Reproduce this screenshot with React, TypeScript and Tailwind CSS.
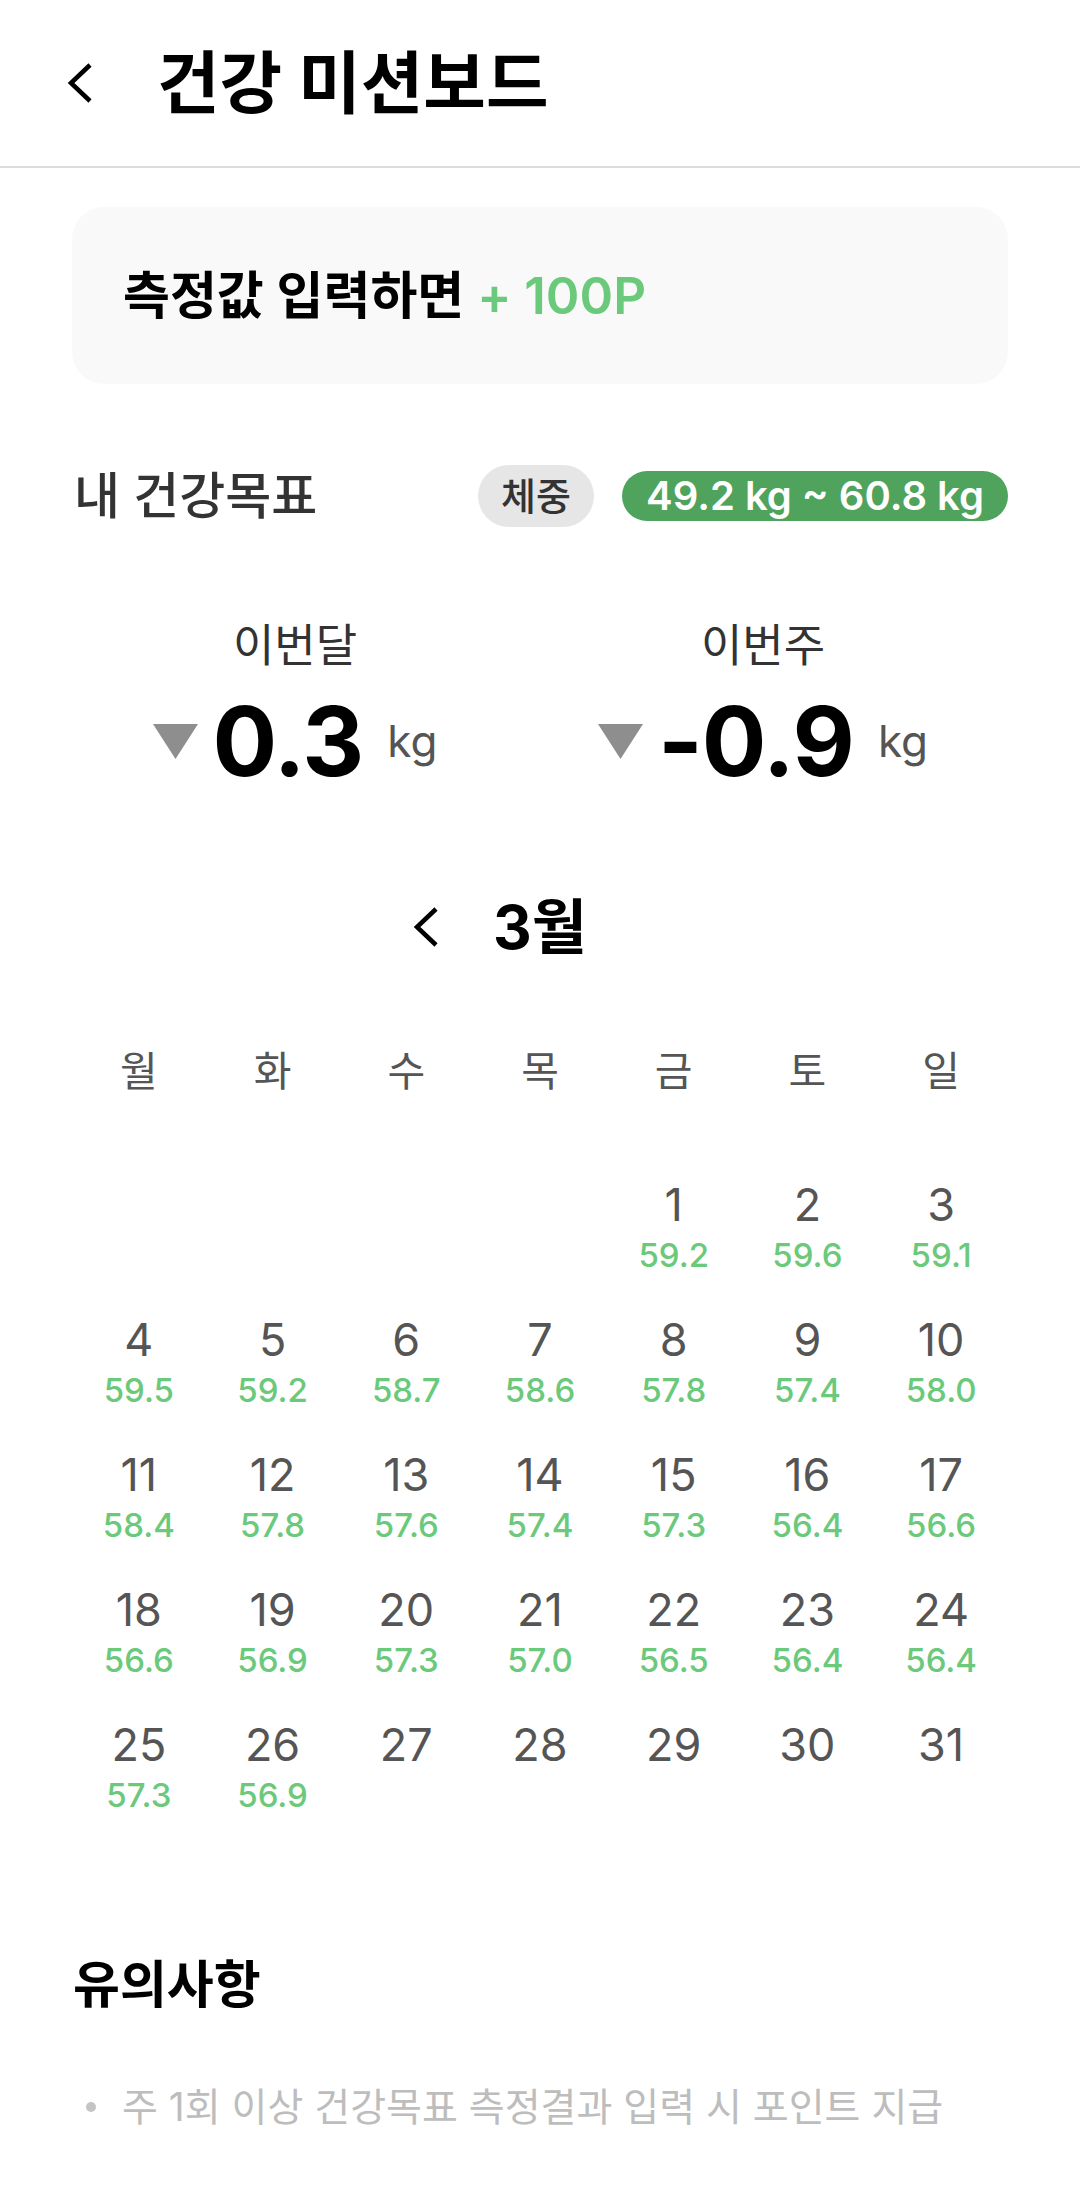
import React from "react";

const WEEKDAYS = ["월", "화", "수", "목", "금", "토", "일"];

const WEIGHTS: Record<number, string> = {
  1: "59.2", 2: "59.6", 3: "59.1",
  4: "59.5", 5: "59.2", 6: "58.7", 7: "58.6", 8: "57.8", 9: "57.4", 10: "58.0",
  11: "58.4", 12: "57.8", 13: "57.6", 14: "57.4", 15: "57.3", 16: "56.4", 17: "56.6",
  18: "56.6", 19: "56.9", 20: "57.3", 21: "57.0", 22: "56.5", 23: "56.4", 24: "56.4",
  25: "57.3", 26: "56.9",
};

// march starts on friday -> 4 blank cells
const CELLS: (number | null)[] = [null, null, null, null, ...Array.from({ length: 31 }, (_, i) => i + 1)];

const FONT = "font-['Inter','Noto_Sans_CJK_KR',sans-serif]";

const Chevron = ({ className }: { className?: string }) => (
  <svg viewBox="0 0 26 40" className={className} fill="none">
    <polyline points="23,2 4,20 23,38" stroke="#000" strokeWidth="4.5" strokeLinecap="butt" strokeLinejoin="miter" />
  </svg>
);

const Delta = ({ value }: { value: string }) => (
  <div className="flex items-center justify-center">
    <svg viewBox="0 0 45 35" className="w-[45px] h-[35px]">
      <polygon points="0,0 45,0 22.5,35" fill="#8e8e8e" />
    </svg>
    <div className="ml-[15px] text-[96px] leading-none font-bold text-black tracking-[-1px]">{value}</div>
    <div className="ml-[24px] text-[44px] leading-none text-[#555555]">kg</div>
  </div>
);

export default function App() {
  return (
    <div className={`w-[1080px] min-h-[2195px] bg-white ${FONT}`}>
      {/* header */}
      <div className="h-[168px] flex items-center border-b-2 border-[#dcdcdc] pl-[67px]">
        <Chevron className="w-[26px] h-[40px]" />
        <div className="ml-[64px] text-[68px] font-bold text-black leading-none">건강 미션보드</div>
      </div>

      {/* point card */}
      <div className="mx-[72px] mt-[39px] h-[177px] rounded-[32px] bg-[#f9f9f9] flex items-center pl-[51px]">
        <div className="text-[51px] font-semibold text-black leading-none">
          측정값 입력하면 <span className="text-[#6bc97b]">+ 100P</span>
        </div>
      </div>

      {/* goal row */}
      <div className="mx-[72px] mt-[81px] h-[62px] flex items-center justify-between">
        <div className="text-[50px] font-medium text-[#333333] leading-none pl-[2px]">내 건강목표</div>
        <div className="flex items-center gap-[28px]">
          <div className="h-[62px] px-[23px] rounded-full bg-[#e6e6e6] flex items-center text-[38px] font-medium text-[#333333]">
            체중
          </div>
          <div className="h-[50px] px-[24px] rounded-full bg-[#4fa35c] flex items-center text-[40px] font-semibold text-white">
            49.2 kg ~ 60.8 kg
          </div>
        </div>
      </div>

      {/* this month / this week */}
      <div className="grid grid-cols-2 w-[936px] ml-[61px] mt-[94px]">
        <div className="flex flex-col items-center">
          <div className="h-[50px] leading-[50px] text-[45px] text-[#333333]">이번달</div>
          <div className="mt-[22px]">
            <Delta value="0.3" />
          </div>
        </div>
        <div className="flex flex-col items-center">
          <div className="h-[50px] leading-[50px] text-[45px] text-[#333333]">이번주</div>
          <div className="mt-[22px]">
            <Delta value="-0.9" />
          </div>
        </div>
      </div>

      {/* month nav */}
      <div className="mt-[108px] h-[60px] flex items-center justify-center">
        <Chevron className="w-[26px] h-[40px]" />
        <div className="ml-[54px] text-[60px] font-bold text-black leading-none">3월</div>
        <div className="w-[80px]" />
      </div>

      {/* calendar */}
      <div className="mx-[72px] mt-[89px] grid grid-cols-7">
        {WEEKDAYS.map((d) => (
          <div key={d} className="h-[50px] leading-[50px] text-center text-[41px] text-[#555555]">
            {d}
          </div>
        ))}
      </div>
      <div className="mx-[72px] mt-[86px] grid grid-cols-7">
        {CELLS.map((n, i) => (
          <div key={i} className="h-[135px] flex flex-col items-center">
            {n !== null && (
              <>
                <div className="text-[45px] leading-[46px] h-[46px] text-[#555555]">{n}</div>
                {WEIGHTS[n] && (
                  <div className="mt-[11px] text-[33px] leading-[33px] font-medium text-[#6bc97b]">{WEIGHTS[n]}</div>
                )}
              </>
            )}
          </div>
        ))}
      </div>

      {/* notice */}
      <div className="mx-[72px] mt-[100px]">
        <div className="h-[56px] leading-[56px] text-[51px] font-bold text-black pl-[1px]">유의사항</div>
        <div className="mt-[71px] flex items-center h-[46px]">
          <div className="ml-[14px] w-[10px] h-[10px] rounded-full bg-[#c4c4c4]" />
          <div className="ml-[26px] text-[39px] leading-[46px] text-[#bdbdbd]">
            주 1회 이상 건강목표 측정결과 입력 시 포인트 지급
          </div>
        </div>
      </div>
    </div>
  );
}
